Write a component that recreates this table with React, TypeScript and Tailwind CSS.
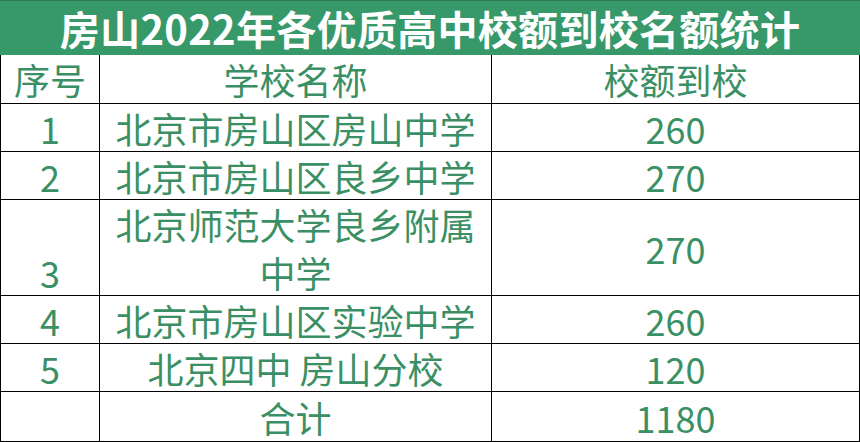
import React from "react";

const font = { fontFamily: '"Noto Sans CJK SC", "Noto Sans", sans-serif' };

type Row = { no: string; name: React.ReactNode; quota: string; h: string; noAlign?: string };

const rows: Row[] = [
  { no: "1", name: "北京市房山区房山中学", quota: "260", h: "h-[48px]" },
  { no: "2", name: "北京市房山区良乡中学", quota: "270", h: "h-[48px]" },
  {
    no: "3",
    name: (
      <span className="block leading-[48px]">
        北京师范大学良乡附属
        <br />
        中学
      </span>
    ),
    quota: "270",
    h: "h-[96px]",
    noAlign: "items-end",
  },
  { no: "4", name: "北京市房山区实验中学", quota: "260", h: "h-[48px]" },
  { no: "5", name: "北京四中 房山分校", quota: "120", h: "h-[48px]" },
  { no: "", name: "合计", quota: "1180", h: "h-[50px]" },
];

export default function App() {
  return (
    <div className="w-[860px] h-[442px] bg-white overflow-hidden" style={font}>
      <div className="h-[55px] bg-[#37986a] border-t border-[#2c7a54] flex items-center justify-center text-white font-bold text-[40px] leading-none tracking-[0.3px]">
        房山2022年各优质高中校额到校名额统计
      </div>
      <div className="border-l border-r border-black w-[860px] text-[#3a9064] text-[36px] leading-none">
        <div className="grid grid-cols-[99px_392px_1fr] h-[49px] border-b border-black">
          <div className="border-r border-black flex items-center justify-center">序号</div>
          <div className="border-r border-black flex items-center justify-center">学校名称</div>
          <div className="flex items-center justify-center">校额到校</div>
        </div>
        {rows.map((r, i) => (
          <div key={i} className={`grid grid-cols-[99px_392px_1fr] border-b border-black ${r.h}`}>
            <div className={`border-r border-black flex justify-center ${r.noAlign ?? "items-center"}`}>
              <span className="block leading-[48px]">{r.no}</span>
            </div>
            <div className="border-r border-black flex items-center justify-center text-center">{r.name}</div>
            <div className="flex items-center justify-center">{r.quota}</div>
          </div>
        ))}
      </div>
    </div>
  );
}
